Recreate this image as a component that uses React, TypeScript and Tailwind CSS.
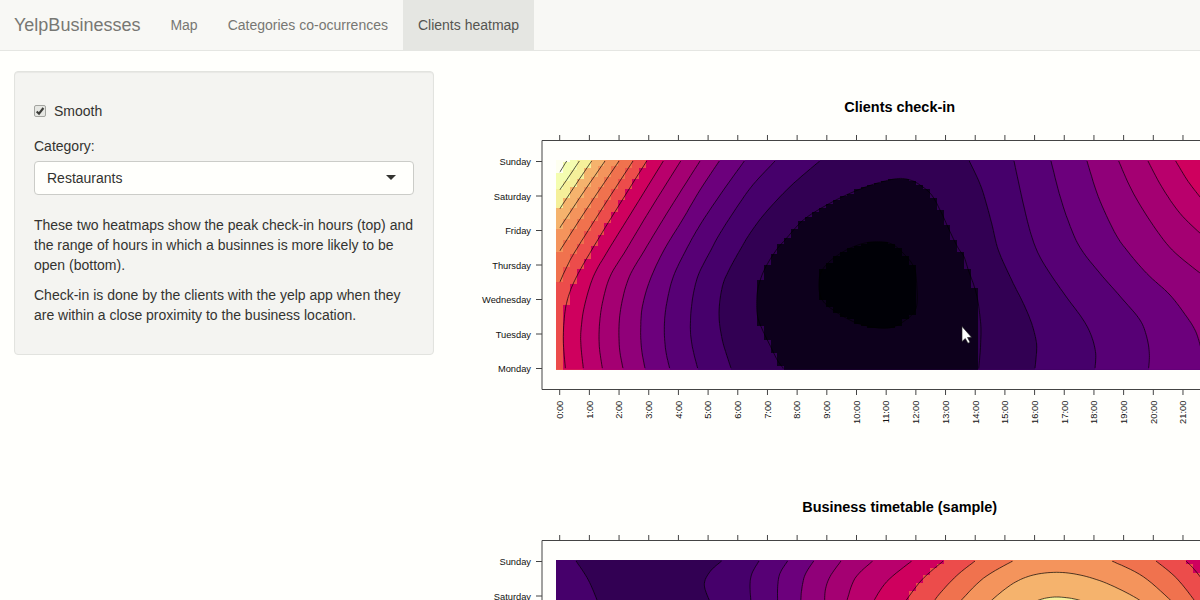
import React from "react";

type Pt = [number, number];

interface Region {
  pts: Pt[];
  color: string;
  stair?: boolean;
  closed?: boolean;
}

interface Heatmap {
  title: string;
  base: string;
  regions: Region[];
}

const LEFT = 556;
const TOP = 160;
const BOTTOM = 369.7;
const RIGHT = 1204;
const CELL_W = 6.92;
const CELL_H = 2.097;

/* Points are measured on three grids, all at a third of a pixel. */
const grid =
  (x0: number, y0: number) =>
  (...v: number[]): Pt[] => {
    const out: Pt[] = [];
    for (let i = 0; i < v.length; i += 2) out.push([x0 + v[i] / 3, y0 + v[i + 1] / 3]);
    return out;
  };

const tl = grid(470, 90);
const bl = grid(470, 250);
const tm = grid(700, 90);
const bm = grid(700, 250);
const tr = grid(940, 90);
const br = grid(940, 250);

/* Catmull-Rom sampling through the control points. */
function smooth(pts: Pt[], closed = false): Pt[] {
  const n = pts.length;
  const at = (i: number): Pt => (closed ? pts[(i + n) % n] : pts[Math.max(0, Math.min(n - 1, i))]);
  const out: Pt[] = [];
  const segs = closed ? n : n - 1;
  for (let i = 0; i < segs; i++) {
    const [a, b, c, d] = [at(i - 1), at(i), at(i + 1), at(i + 2)];
    for (let k = 0; k < 8; k++) {
      const t = k / 8;
      const f = (j: 0 | 1) =>
        0.5 *
        (2 * b[j] +
          (c[j] - a[j]) * t +
          (2 * a[j] - 5 * b[j] + 4 * c[j] - d[j]) * t * t +
          (3 * b[j] - a[j] - 3 * c[j] + d[j]) * t * t * t);
      out.push([f(0), f(1)]);
    }
  }
  out.push(closed ? out[0] : pts[n - 1]);
  return out;
}

const toPath = (pts: Pt[]) => pts.map(([x, y], i) => `${i ? "L" : "M"}${x.toFixed(1)} ${y.toFixed(1)}`).join("");

/* Everything to the right of a contour, out to the edges of the plot. */
function area(r: Region): Pt[] {
  const s = smooth(r.pts, r.closed);
  if (r.closed) return s;
  const first = s[0];
  const last = s[s.length - 1];
  const out: Pt[] = [[first[0] + 1, TOP - 1], ...s];
  if (last[0] < 562) out.push([LEFT - 1, last[1] + 5], [LEFT - 1, BOTTOM + 1]);
  else if (last[0] < 1196 || last[1] > 360) out.push([last[0], BOTTOM + 1]);
  else return [...out, [RIGHT, last[1] + 4], [RIGHT, TOP - 1]];
  return [...out, [RIGHT, BOTTOM + 1], [RIGHT, TOP - 1]];
}

/* The cells whose centres lie in the polygon, one strip of cells at a time. */
function cells(poly: Pt[]): string {
  let d = "";
  for (let row = 0; row < 100; row++) {
    const y0 = TOP + row * CELL_H;
    const yc = y0 + CELL_H / 2;
    const xs: number[] = [];
    poly.forEach((p, i) => {
      const q = poly[(i + 1) % poly.length];
      if (p[1] <= yc !== q[1] <= yc) xs.push(p[0] + ((yc - p[1]) / (q[1] - p[1])) * (q[0] - p[0]));
    });
    xs.sort((a, b) => a - b);
    for (let i = 0; i + 1 < xs.length; i += 2) {
      const a = LEFT + Math.max(0, Math.round((xs[i] - LEFT) / CELL_W)) * CELL_W;
      const b = LEFT + Math.round((xs[i + 1] - LEFT) / CELL_W) * CELL_W;
      if (b > a) d += `M${a.toFixed(1)} ${Math.round(y0)}H${b.toFixed(1)}V${Math.round(y0 + CELL_H)}H${a.toFixed(1)}z`;
    }
  }
  return d;
}

const checkin: Heatmap = {
  title: "Clients check-in",
  base: "#fefff0",
  regions: [
    { pts: tl(290, 213, 269, 247), color: "#f4fdb0", stair: true },
    { pts: tl(328, 213, 298, 258, 269, 300), color: "#f5f09a", stair: true },
    { pts: tl(365, 213, 317, 284, 269, 357), color: "#f5b36d", stair: true },
    { pts: tl(405, 213, 337, 312, 269, 414), color: "#f4945c", stair: true },
    { pts: tl(447, 213, 350, 357, 269, 483), color: "#f0724e", stair: true },
    { pts: [...tl(489, 213, 400, 350, 318, 480), ...bl(293, 45, 269, 97)], color: "#ec4c4b", stair: true },
    {
      pts: [...tl(530, 213, 435, 365), ...bl(365, 0, 325, 70, 300, 125, 285, 185, 280, 270, 286, 355)],
      color: "#cf005e",
      stair: true,
    },
    { pts: [...tl(580, 213, 480, 375), ...bl(415, 0, 370, 80, 343, 170, 333, 240, 333, 290, 340, 355)], color: "#b9006c" },
    { pts: [...tl(632, 213, 540, 360), ...bl(468, 0, 420, 80, 397, 160, 388, 230, 388, 290, 397, 355)], color: "#a40072" },
    { pts: [...tl(690, 213, 600, 355), ...bl(524, 0, 478, 80, 455, 160, 447, 230, 449, 300, 459, 355)], color: "#900079" },
    { pts: [...tl(748, 213, 690, 300, 637, 390), ...bl(582, 0, 540, 90, 517, 170, 512, 240, 515, 300, 525, 355)], color: "#6c007c" },
    { pts: [...tl(823, 213, 750, 315, 690, 405), ...bl(648, 0, 610, 80, 590, 160, 583, 230, 587, 300, 599, 355)], color: "#570075" },
    {
      pts: [...tm(225, 213, 160, 283, 115, 345, 60, 430), ...bl(723, 0, 685, 75, 667, 150, 661, 230, 667, 290, 683, 355)],
      color: "#46006b",
    },
    {
      pts: [...tm(359, 213, 270, 290, 195, 370, 150, 430), ...bm(120, 0, 87, 60, 67, 110, 57, 190, 67, 270, 93, 355)],
      color: "#320053",
    },
    {
      closed: true,
      stair: true,
      color: "#0d001c",
      pts: [
        ...tm(255, 450, 310, 390, 380, 345, 450, 310, 520, 283, 590, 266, 630, 270, 660, 285, 695, 315, 725, 370, 750, 425, 775, 475),
        ...br(72, 20, 85, 60, 103, 110, 113, 150, 120, 200, 123, 240, 121, 300, 116, 357, 116, 370),
        ...bm(260, 370, 250, 355, 232, 330, 212, 290, 190, 245, 174, 205, 170, 160, 175, 110, 195, 55, 229, 0),
      ],
    },
    {
      closed: true,
      stair: true,
      color: "#000006",
      pts: [
        ...tm(430, 485, 480, 463, 530, 455, 575, 462),
        ...bm(610, 10, 641, 50, 650, 100, 648, 175, 610, 215, 560, 235, 490, 225, 440, 205, 380, 165, 359, 130, 360, 75, 385, 38),
      ],
    },
    { pts: [...tr(88, 213, 125, 295, 155, 400), ...br(175, 0, 215, 90, 250, 160, 275, 220, 288, 270, 290, 300, 285, 355)], color: "#46006b" },
    { pts: [...tr(222, 213, 245, 320, 268, 415), ...br(290, 0, 320, 55, 375, 135, 430, 210, 455, 260, 467, 310, 465, 355)], color: "#570075" },
    { pts: [...tr(333, 213, 362, 325, 395, 420), ...br(425, 0, 480, 70, 550, 150, 600, 210, 620, 260, 628, 310, 626, 355)], color: "#6c007c" },
    { pts: [...tr(441, 213, 475, 320, 523, 425), ...br(560, 0, 620, 70, 690, 135, 740, 200, 765, 240, 779, 280, 786, 320, 784, 355)], color: "#900079" },
    { pts: [...tr(536, 213, 575, 300, 632, 395), ...br(697, 0, 785, 73)], color: "#a40072" },
    { pts: tr(624, 213, 665, 290, 720, 370, 785, 434), color: "#b9006c" },
    { pts: tr(707, 213, 745, 275, 785, 327), color: "#cf005e" },
  ],
};

const timetable: Heatmap = {
  title: "Business timetable (sample)",
  base: "#46006b",
  regions: [
    { pts: tl(318, 213, 355, 270, 383, 335), color: "#320053" },
    { pts: tm(65, 213, 30, 245, 13, 285, 32, 340), color: "#46006b" },
    { pts: tm(177, 213, 156, 250, 150, 285, 153, 340), color: "#570075" },
    { pts: tm(263, 213, 240, 250, 233, 290, 233, 340), color: "#6c007c" },
    { pts: tm(341, 213, 315, 255, 305, 300, 302, 340), color: "#900079" },
    { pts: tm(423, 213, 390, 260, 376, 300, 374, 340), color: "#a40072" },
    { pts: tm(518, 213, 465, 265, 440, 335), color: "#b9006c" },
    { pts: tm(635, 213, 560, 275, 517, 340), color: "#cf005e" },
    { pts: tm(730, 213, 665, 270, 612, 340), color: "#ec4c4b", stair: true },
    { pts: tr(105, 213, 50, 257, 0, 310, -22, 340), color: "#f0724e" },
    { pts: tr(218, 213, 130, 265, 55, 340), color: "#f4945c" },
    {
      closed: true,
      color: "#f5b36d",
      pts: tr(90, 410, 120, 368, 158, 328, 220, 280, 280, 255, 350, 247, 420, 255, 500, 280, 590, 325, 650, 370, 690, 420),
    },
    { closed: true, color: "#f5f09a", pts: tr(275, 345, 303, 328, 350, 321, 408, 328, 445, 345, 350, 370) },
    { pts: tr(516, 213, 610, 260, 702, 340), color: "#f0724e" },
    { pts: tr(648, 213, 710, 265, 770, 340), color: "#ec4c4b" },
    { pts: tr(738, 213, 760, 235, 785, 266), color: "#cf005e", stair: true },
  ],
};

const days = ["Sunday", "Saturday", "Friday", "Thursday", "Wednesday", "Tuesday", "Monday"];
const hours = Array.from({ length: 22 }, (_, i) => `${i}:00`);

function HeatmapPlot({ map, id, pointer, cropped }: { map: Heatmap; id: string; pointer?: boolean; cropped?: boolean }) {
  const shownDays = cropped ? days.slice(0, 2) : days;
  return (
    <svg width="736" height="400" viewBox="464 71 736 400" className="block shrink-0" fontFamily='"Liberation Sans", Arial, sans-serif'>
      <clipPath id={`${id}-area`}>
        <rect x={LEFT} y={TOP} width={RIGHT - LEFT} height={BOTTOM - TOP} />
      </clipPath>
      <clipPath id={`${id}-lines`}>
        <rect x={559.5} y={161} width={RIGHT - LEFT} height={207.5} />
      </clipPath>
      <text x="899.7" y="112" fontSize="14.45" fontWeight="700" textAnchor="middle" fill="#000">
        {map.title}
      </text>
      <g clipPath={`url(#${id}-area)`}>
        <rect x={LEFT} y={TOP} width={RIGHT - LEFT} height={BOTTOM - TOP} fill={map.base} />
        {map.regions.map((r, i) => {
          const poly = area(r);
          return <path key={i} d={r.stair ? cells(poly) : toPath(poly) + "Z"} fill={r.color} shapeRendering="crispEdges" />;
        })}
      </g>
      <g clipPath={`url(#${id}-lines)`} fill="none" stroke="#000" strokeWidth="0.8" strokeOpacity="0.85">
        {map.regions.map((r, i) => (
          <path key={i} d={toPath(smooth(r.pts, r.closed))} />
        ))}
      </g>
      <g stroke="#444" strokeWidth="1" fill="none">
        <path d="M1210 140.5H542V389.5H1210" />
        {hours.map((h, i) => {
          const x = 559.7 + i * 29.68;
          return <path key={h} d={`M${x} 135V140.5M${x} 389.5V395`} />;
        })}
        {shownDays.map((d, i) => {
          const y = 161.5 + i * 34.5;
          return <path key={d} d={`M536 ${y}H542`} />;
        })}
      </g>
      <g fontSize="9.3" fill="#111" textAnchor="end">
        {shownDays.map((d, i) => (
          <text key={d} x="531" y={165 + i * 34.5}>
            {d}
          </text>
        ))}
        {!cropped &&
          hours.map((h, i) => (
            <text key={h} transform={`translate(${563 + i * 29.68} 400.7) rotate(-90)`}>
              {h}
            </text>
          ))}
      </g>
      {pointer && (
        <path d="M962 326.5V341.5L965.3 338.5L968 343.2L970 342.2L967.5 337.5L971.5 337.3Z" fill="#fff" stroke="#222" strokeWidth="0.6" />
      )}
    </svg>
  );
}

function NavItem({ label, active }: { label: string; active?: boolean }) {
  return (
    <a className={active ? "bg-[#e5e6e2] px-[15px] py-[15px] text-[#555551]" : "px-[15px] py-[15px] text-[#777773]"}>{label}</a>
  );
}

export default function App() {
  return (
    <div className="h-[600px] w-[1200px] overflow-hidden bg-[#fffffc] font-['Liberation_Sans',Arial,sans-serif] text-[14px] leading-5 text-[#333330]">
      <nav className="flex h-[51px] border-b border-[#e5e6e2] bg-[#f8f8f5] pl-[14px]">
        <span className="py-[15px] pr-[15px] text-[18px] text-[#777773]">YelpBusinesses</span>
        <NavItem label="Map" />
        <NavItem label="Categories co-ocurrences" />
        <NavItem label="Clients heatmap" active />
      </nav>
      <div className="flex pl-[14px] pt-5">
        <aside className="mr-[30px] h-[284px] w-[420px] shrink-0 rounded-[4px] border border-[#e2e3df] bg-[#f4f4f1] px-[19px] pt-[29px] shadow-[inset_0_1px_1px_rgba(0,0,0,0.05)]">
          <label className="flex items-center">
            <svg width="14" height="14" viewBox="0 0 14 14" className="-ml-px mr-[7px]">
              <rect x="1.5" y="1.5" width="11" height="11" rx="1.5" fill="#e6e7e3" stroke="#a3a4a0" />
              <path d="M3.7 7.5L6 9.7L10.4 4" fill="none" stroke="#3d3d3a" strokeWidth="2.1" />
            </svg>
            Smooth
          </label>
          <div className="mt-[15px]">Category:</div>
          <div className="mt-[5px] flex h-[34px] items-center justify-between rounded-[4px] border border-[#cbccc8] bg-[#fffffc] pl-3 pr-[17px]">
            Restaurants
            <svg width="10" height="5" viewBox="0 0 10 5" className="-mt-px">
              <path d="M0 0H10L5 5Z" fill="#333330" />
            </svg>
          </div>
          <p className="mt-5 whitespace-nowrap">
            These two heatmaps show the peak check-in hours (top) and
            <br />
            the range of hours in which a businnes is more likely to be
            <br />
            open (bottom).
          </p>
          <p className="mt-[10px] whitespace-nowrap">
            Check-in is done by the clients with the yelp app when they
            <br />
            are within a close proximity to the business location.
          </p>
        </aside>
        <main className="flex flex-col">
          <HeatmapPlot map={checkin} id="checkin" pointer />
          <HeatmapPlot map={timetable} id="timetable" cropped />
        </main>
      </div>
    </div>
  );
}
